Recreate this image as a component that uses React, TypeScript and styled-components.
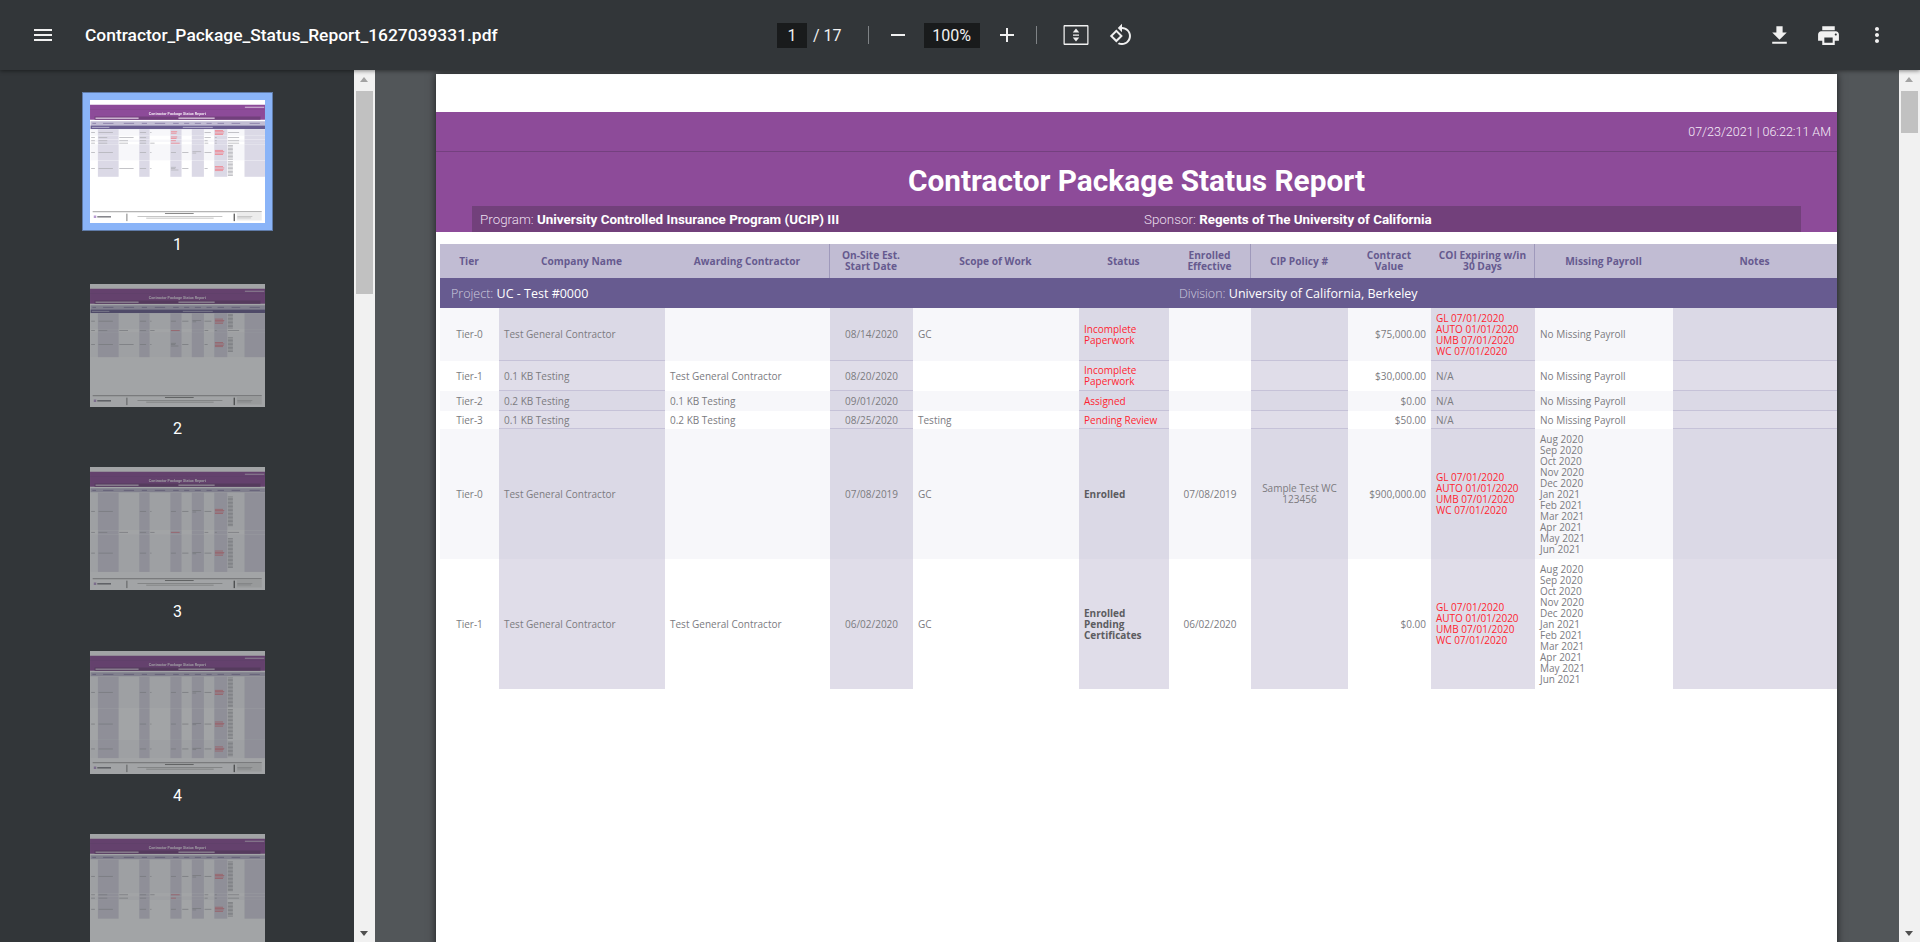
import React from "react";
import styled, { createGlobalStyle } from "styled-components";

interface ReportRow {
  h: number;
  cells: string[];
  statusBold?: boolean;
}

interface ThumbData {
  project: boolean;
  rows: ReportRow[];
}

interface Column {
  w: number;
  title: string;
  align: "left" | "center" | "right";
  shade?: boolean;
  divider?: boolean;
}

const columns: Column[] = [
  { w: 59, title: "Tier", align: "center" },
  { w: 166, title: "Company Name", align: "left", shade: true },
  { w: 165, title: "Awarding Contractor", align: "left", divider: true },
  { w: 83, title: "On-Site Est.\nStart Date", align: "center", shade: true },
  { w: 166, title: "Scope of Work", align: "left" },
  { w: 90, title: "Status", align: "left", shade: true },
  { w: 82, title: "Enrolled\nEffective", align: "center", divider: true },
  { w: 97, title: "CIP Policy #", align: "center", shade: true },
  { w: 83, title: "Contract\nValue", align: "right" },
  { w: 104, title: "COI Expiring w/in\n30 Days", align: "left", shade: true, divider: true },
  { w: 138, title: "Missing Payroll", align: "left" },
  { w: 164, title: "Notes", align: "left", shade: true },
];

const COI = "GL 07/01/2020\nAUTO 01/01/2020\nUMB 07/01/2020\nWC 07/01/2020";
const MONTHS =
  "Aug 2020\nSep 2020\nOct 2020\nNov 2020\nDec 2020\nJan 2021\nFeb 2021\nMar 2021\nApr 2021\nMay 2021\nJun 2021";
const NO_PAYROLL = "No Missing Payroll";
const PAPERWORK = "Incomplete\nPaperwork";
const TGC = "Test General Contractor";

const rows: ReportRow[] = [
  { h: 53, cells: ["Tier-0", TGC, "", "08/14/2020", "GC", PAPERWORK, "", "", "$75,000.00", COI, NO_PAYROLL, ""] },
  { h: 30, cells: ["Tier-1", "0.1 KB Testing", TGC, "08/20/2020", "", PAPERWORK, "", "", "$30,000.00", "N/A", NO_PAYROLL, ""] },
  { h: 20, cells: ["Tier-2", "0.2 KB Testing", "0.1 KB Testing", "09/01/2020", "", "Assigned", "", "", "$0.00", "N/A", NO_PAYROLL, ""] },
  { h: 18, cells: ["Tier-3", "0.1 KB Testing", "0.2 KB Testing", "08/25/2020", "Testing", "Pending Review", "", "", "$50.00", "N/A", NO_PAYROLL, ""] },
  { h: 130, statusBold: true, cells: ["Tier-0", TGC, "", "07/08/2019", "GC", "Enrolled", "07/08/2019", "Sample Test WC\n123456", "$900,000.00", COI, MONTHS, ""] },
  { h: 130, statusBold: true, cells: ["Tier-1", TGC, TGC, "06/02/2020", "GC", "Enrolled\nPending\nCertificates", "06/02/2020", "", "$0.00", COI, MONTHS, ""] },
];

const longRow = (h: number): ReportRow => ({
  h,
  statusBold: true,
  cells: rows[4].cells.map((c, i) => (i === 10 ? `${MONTHS}\n${MONTHS}` : c)),
});

const laterPages: ThumbData[] = [
  { project: true, rows: [{ ...rows[4], h: 128 }, { ...rows[3], h: 24 }, { ...rows[5], h: 200 }] },
  { project: false, rows: [longRow(303), { ...rows[3], h: 33 }, longRow(300)] },
  { project: false, rows: [longRow(255), longRow(253), { ...rows[4], h: 146 }] },
  { project: false, rows: [longRow(271), { ...rows[3], h: 25 }, { ...rows[2], h: 28 }, { ...rows[4], h: 150 }] },
];

const gridColumns = columns.map((c) => `${c.w}px`).join(" ");

const GlobalStyle = createGlobalStyle`
  html, body {
    margin: 0;
    height: 100%;
    overflow: hidden;
    background: #323639;
  }
`;

const Viewer = styled.div`
  height: 100vh;
  display: flex;
  flex-direction: column;
  font-family: "Roboto", "Liberation Sans", sans-serif;
`;

const Toolbar = styled.header`
  position: relative;
  z-index: 2;
  flex: none;
  height: 70px;
  display: grid;
  grid-template-columns: 777px 370px 1fr;
  align-items: center;
  background: #323639;
  color: #fff;
  box-shadow: 0 1px 4px rgba(0, 0, 0, 0.45);
`;

const ToolbarLeft = styled.div`
  display: flex;
  align-items: center;
  padding-left: 31px;
  gap: 30px;
`;

const FileName = styled.div`
  font-size: 17.4px;
  font-weight: 500;
  white-space: nowrap;
`;

const ToolbarCenter = styled.div`
  display: flex;
  align-items: center;
`;

const ToolbarRight = styled.div`
  display: flex;
  align-items: center;
  justify-content: flex-end;
  padding-right: 31px;
  gap: 24px;
`;

const IconSvg = styled.svg<{ $gap?: number }>`
  display: block;
  flex: none;
  width: ${(p) => p.width ?? 24}px;
  height: ${(p) => p.height ?? 24}px;
  margin-left: ${(p) => p.$gap ?? 0}px;
  fill: #f1f1f1;
`;

const InputBox = styled.div<{ $w: number; $gap?: number }>`
  width: ${(p) => p.$w}px;
  height: 25px;
  margin-left: ${(p) => p.$gap ?? 0}px;
  display: flex;
  align-items: center;
  justify-content: center;
  background: #191b1c;
  font-size: 16px;
  color: #f1f1f1;
`;

const PageTotal = styled.span`
  margin-left: 6px;
  font-size: 16px;
  color: #f1f1f1;
  white-space: pre;
`;

const Separator = styled.span<{ $left: number; $right: number }>`
  width: 1px;
  height: 18px;
  margin: 0 ${(p) => p.$right}px 0 ${(p) => p.$left}px;
  background: #7f8386;
`;

const Body = styled.div`
  flex: 1;
  min-height: 0;
  display: flex;
`;

const Sidebar = styled.aside`
  width: 354px;
  flex: none;
  overflow: hidden;
  padding-top: 30px;
  display: flex;
  flex-direction: column;
  align-items: center;
  background: #323639;
`;

const ThumbItem = styled.div`
  flex: none;
  width: 175px;
  height: 183.5px;
  margin-left: 1px;
  display: flex;
  flex-direction: column;
  align-items: center;
`;

const ThumbFrame = styled.div<{ $active: boolean }>`
  width: 175px;
  height: 123px;
  background: #fff;
  opacity: ${(p) => (p.$active ? 1 : 0.55)};
  outline: ${(p) => (p.$active ? "7px solid #8ab4f8" : "none")};
  box-shadow: ${(p) => (p.$active ? "0 0 0 8px #5f7ba8" : "none")};
`;

const ThumbLabel = styled.div`
  margin-top: 14px;
  color: #fff;
  font-size: 16px;
  line-height: 16px;
`;

const ScrollTrack = styled.div`
  position: relative;
  flex: none;
  width: 21px;
  background: #f1f1f1;
`;

const ScrollThumb = styled.div<{ $top: number; $height: number }>`
  position: absolute;
  left: 2px;
  right: 2px;
  top: ${(p) => p.$top}px;
  height: ${(p) => p.$height}px;
  background: #c1c1c1;
`;

const ScrollArrow = styled.div<{ $down?: boolean }>`
  position: absolute;
  left: 6px;
  ${(p) => (p.$down ? "bottom: 6px;" : "top: 7px;")}
  width: 0;
  height: 0;
  border-left: 4.5px solid transparent;
  border-right: 4.5px solid transparent;
  ${(p) => (p.$down ? "border-top: 5px solid #505050;" : "border-bottom: 5px solid #a3a3a3;")}
`;

const Main = styled.main`
  flex: 1;
  min-width: 0;
  overflow: hidden;
  padding: 4px 0 0 61px;
  background: #525659;
`;

const Page = styled.div`
  width: 1401px;
  height: 985px;
  padding-top: 38px;
  box-sizing: border-box;
  background: #fff;
  box-shadow: 0 0 8px rgba(0, 0, 0, 0.65);
`;

const Banner = styled.section`
  height: 120px;
  display: flex;
  flex-direction: column;
  background: #8d4b99;
  color: #fff;
`;

const StampRow = styled.div`
  height: 39px;
  flex: none;
  display: flex;
  align-items: center;
  justify-content: flex-end;
  padding: 0 6px 0 0;
  border-bottom: 1px solid #74407f;
  font-size: 12.5px;
  font-weight: 300;
  color: #f6eef8;
`;

const ReportTitle = styled.h1`
  flex: 1;
  margin: 0;
  padding-top: 2px;
  display: flex;
  align-items: center;
  justify-content: center;
  font-size: 29.8px;
  font-weight: 700;
`;

const InfoBar = styled.div`
  height: 26px;
  flex: none;
  margin: 0 36px;
  display: grid;
  grid-template-columns: 672px 1fr;
  align-items: center;
  background: #72407b;
  font-size: 13.4px;
`;

const InfoItem = styled.div`
  padding-left: 8px;
  font-weight: 300;
  color: #ebdfee;
  white-space: nowrap;
  &:last-child {
    padding-left: 0;
  }
  b {
    font-weight: 700;
    color: #fff;
  }
`;

const Table = styled.div`
  margin: 12px 0 0 4px;
  font-family: "Open Sans", "Liberation Sans", sans-serif;
  font-size: 10px;
  line-height: 11px;
`;

const HeaderRow = styled.div`
  height: 34px;
  display: grid;
  grid-template-columns: ${gridColumns};
  background: #c1bcd3;
`;

const HeaderCell = styled.div<{ $divider?: boolean }>`
  display: flex;
  align-items: center;
  justify-content: center;
  text-align: center;
  white-space: pre-line;
  font-size: 10.2px;
  font-weight: 700;
  color: #665a8f;
  box-sizing: border-box;
  border-right: 1px solid ${(p) => (p.$divider ? "#9f99bb" : "transparent")};
`;

const ProjectRow = styled.div`
  height: 30px;
  display: grid;
  grid-template-columns: 739px 1fr;
  align-items: center;
  background: #675b90;
  font-size: 12.5px;
  color: #fff;
`;

const ProjectItem = styled.div`
  padding-left: 11px;
  white-space: nowrap;
  &:last-child {
    padding-left: 0;
  }
  span {
    color: #cfcbdf;
    font-weight: 300;
  }
`;

const DataRow = styled.div<{ $h: number; $odd: boolean }>`
  height: ${(p) => p.$h}px;
  display: grid;
  grid-template-columns: ${gridColumns};
  background: ${(p) => (p.$odd ? "#f7f7fa" : "#fff")};
`;

type Tone = "plain" | "red" | "bold";

const toneColor: Record<Tone, string> = {
  plain: "#7b7b7f",
  red: "#ff1f30",
  bold: "#5c5c60",
};

const DataCell = styled.div<{ $align: string; $shade?: boolean; $odd: boolean; $tone: Tone; $line: boolean }>`
  display: flex;
  align-items: center;
  justify-content: ${(p) =>
    p.$align === "center" ? "center" : p.$align === "right" ? "flex-end" : "flex-start"};
  box-sizing: border-box;
  padding: 1px 5px 0;
  text-align: ${(p) => p.$align};
  white-space: pre-line;
  color: ${(p) => toneColor[p.$tone]};
  font-weight: ${(p) => (p.$tone === "bold" ? 700 : 400)};
  background: ${(p) => (p.$shade ? (p.$odd ? "#dbd9e6" : "#e0dde9") : "transparent")};
  border-bottom: 1px solid ${(p) => (p.$shade && p.$line ? "#c6c2d8" : "transparent")};
`;

const MenuIcon = () => (
  <IconSvg viewBox="0 0 24 24">
    <path d="M3 18h18v-2H3v2zm0-5h18v-2H3v2zm0-7v2h18V6H3z" />
  </IconSvg>
);

const MinusIcon = () => (
  <IconSvg viewBox="0 0 24 24">
    <path d="M19 13H5v-2h14v2z" />
  </IconSvg>
);

const PlusIcon = () => (
  <IconSvg viewBox="0 0 24 24" $gap={15}>
    <path d="M19 13h-6v6h-2v-6H5v-2h6V5h2v6h6v2z" />
  </IconSvg>
);

const FitIcon = () => (
  <IconSvg viewBox="0 0 24 24" width={30} height={30}>
    <path d="M3 4h18c.55 0 1 .45 1 1v14c0 .55-.45 1-1 1H3c-.55 0-1-.45-1-1V5c0-.55.45-1 1-1zm0 1.2v13.6h18V5.2H3z" />
    <path d="M12 6.8l2.6 3.2H9.4L12 6.8zM12 17.2L9.4 14h5.2L12 17.2zM9.6 11.5h4.8v1H9.6z" />
  </IconSvg>
);

const RotateIcon = () => (
  <IconSvg viewBox="0 0 24 24" $gap={18}>
    <path d="M7.34 6.41L.86 12.9l6.49 6.48 6.49-6.48-6.5-6.49zM3.69 12.9l3.66-3.66L11 12.9l-3.66 3.66-3.65-3.66zm15.67-6.26C17.61 4.88 15.3 4 13 4V.76L8.76 5 13 9.24V6c1.79 0 3.58.68 4.95 2.05 2.73 2.73 2.73 7.17 0 9.9C16.58 19.32 14.79 20 13 20c-.97 0-1.94-.21-2.84-.61l-1.49 1.49C10.02 21.62 11.51 22 13 22c2.3 0 4.61-.88 6.36-2.64 3.52-3.51 3.52-9.21 0-12.72z" />
  </IconSvg>
);

const DownloadIcon = () => (
  <IconSvg viewBox="0 0 24 24" width={25} height={25}>
    <path d="M19 9h-4V3H9v6H5l7 7 7-7zM5 18v2h14v-2H5z" />
  </IconSvg>
);

const PrintIcon = () => (
  <IconSvg viewBox="0 0 24 24" width={25} height={25}>
    <path d="M19 8H5c-1.66 0-3 1.34-3 3v6h4v4h12v-4h4v-6c0-1.66-1.34-3-3-3zm-3 11H8v-5h8v5zm3-7c-.55 0-1-.45-1-1s.45-1 1-1 1 .45 1 1-.45 1-1 1zm-1-9H6v4h12V3z" />
  </IconSvg>
);

const MoreIcon = () => (
  <IconSvg viewBox="0 0 24 24">
    <path d="M12 8c1.1 0 2-.9 2-2s-.9-2-2-2-2 .9-2 2 .9 2 2 2zm0 2c-1.1 0-2 .9-2 2s.9 2 2 2 2-.9 2-2-.9-2-2-2zm0 6c-1.1 0-2 .9-2 2s.9 2 2 2 2-.9 2-2-.9-2-2-2z" />
  </IconSvg>
);

// tiny copy of the report page, drawn in page pixels and blurred like a rendered preview
const ThumbPage = ({ data, id }: { data: ThumbData; id: string }) => {
  const xs = columns.reduce<number[]>((acc, c) => [...acc, acc[acc.length - 1] + c.w], [4]);
  let y = data.project ? 234 : 204;
  return (
    <svg viewBox="0 0 1401 985" width="175" height="123" style={{ display: "block" }}>
      <defs>
        <filter id={id}>
          <feGaussianBlur stdDeviation="4" />
        </filter>
      </defs>
      <g filter={`url(#${id})`}>
        <rect x="0" y="38" width="1401" height="120" fill="#8d4b99" />
        <rect x="0" y="77" width="1401" height="2" fill="#74407f" />
        <rect x="1240" y="54" width="155" height="8" fill="#d8c2dd" />
        <text x="700" y="118" fontFamily="Roboto" fontWeight="700" fontSize="30" textAnchor="middle" fill="#efe4f1">
          Contractor Package Status Report
        </text>
        <rect x="36" y="132" width="1329" height="26" fill="#72407b" />
        <rect x="44" y="141" width="345" height="9" fill="#eadcee" />
        <rect x="708" y="141" width="290" height="9" fill="#eadcee" />
        <rect x="4" y="170" width="1397" height="34" fill="#c1bcd3" />
        {data.project && (
          <>
            <rect x="4" y="204" width="1397" height="30" fill="#675b90" />
            <rect x="15" y="215" width="140" height="9" fill="#a9a3c4" />
            <rect x="743" y="215" width="240" height="9" fill="#a9a3c4" />
          </>
        )}
        {columns.map((c, i) => (
          <rect key={i} x={xs[i] + c.w / 4} y="183" width={c.w / 2} height="8" fill="#8f85ad" />
        ))}
        {data.rows.map((row, r) => {
          const top = y;
          y += row.h;
          return (
            <g key={r}>
              <rect x="4" y={top} width="1397" height={row.h} fill={r % 2 === 0 ? "#f7f7fa" : "#fff"} />
              {columns.map((c, i) => {
                const lines = row.cells[i] ? row.cells[i].split("\n") : [];
                const red = (i === 5 && !row.statusBold) || (i === 9 && row.cells[i] !== "N/A");
                return (
                  <g key={i}>
                    {c.shade && <rect x={xs[i]} y={top} width={c.w} height={row.h} fill="#dbd9e6" />}
                    {lines.map((line, l) => (
                      <rect
                        key={l}
                        x={xs[i] + 5}
                        y={top + row.h / 2 - (lines.length * 11) / 2 + l * 11 + 2}
                        width={Math.min(line.length * 5, c.w - 10)}
                        height="6"
                        fill={red ? "#f07d89" : "#b0b0b6"}
                      />
                    ))}
                  </g>
                );
              })}
            </g>
          );
        })}
        <rect x="21" y="893" width="1354" height="5" fill="#666" />
        <rect x="30" y="925" width="20" height="20" fill="#b79ad0" />
        <rect x="58" y="930" width="110" height="11" fill="#77777c" />
        <rect x="290" y="910" width="10" height="60" fill="#9a9a9a" />
        <rect x="600" y="905" width="230" height="8" fill="#8a8a8a" />
        <rect x="380" y="930" width="680" height="6" fill="#b3b3b3" />
        <rect x="450" y="943" width="540" height="6" fill="#b3b3b3" />
        <rect x="1150" y="910" width="10" height="60" fill="#555" />
        <rect x="1175" y="905" width="200" height="60" fill="#ececec" />
        <rect x="1180" y="930" width="120" height="5" fill="#b3b3b3" />
        <rect x="1180" y="942" width="110" height="5" fill="#b3b3b3" />
      </g>
    </svg>
  );
};

const App = () => (
  <Viewer>
    <GlobalStyle />
    <Toolbar>
      <ToolbarLeft>
        <MenuIcon />
        <FileName>Contractor_Package_Status_Report_1627039331.pdf</FileName>
      </ToolbarLeft>
      <ToolbarCenter>
        <InputBox $w={30}>1</InputBox>
        <PageTotal>/ 17</PageTotal>
        <Separator $left={26} $right={17} />
        <MinusIcon />
        <InputBox $w={56} $gap={14}>100%</InputBox>
        <PlusIcon />
        <Separator $left={17} $right={24} />
        <FitIcon />
        <RotateIcon />
      </ToolbarCenter>
      <ToolbarRight>
        <DownloadIcon />
        <PrintIcon />
        <MoreIcon />
      </ToolbarRight>
    </Toolbar>
    <Body>
      <Sidebar>
        <ThumbItem>
          <ThumbFrame $active>
            <ThumbPage data={{ project: true, rows }} id="thumb-1" />
          </ThumbFrame>
          <ThumbLabel>1</ThumbLabel>
        </ThumbItem>
        {laterPages.map((data, i) => (
          <ThumbItem key={i}>
            <ThumbFrame $active={false}>
              <ThumbPage data={data} id={`thumb-${i + 2}`} />
            </ThumbFrame>
            {i < laterPages.length - 1 && <ThumbLabel>{i + 2}</ThumbLabel>}
          </ThumbItem>
        ))}
      </Sidebar>
      <ScrollTrack>
        <ScrollArrow />
        <ScrollThumb $top={21} $height={203} />
        <ScrollArrow $down />
      </ScrollTrack>
      <Main>
        <Page>
          <Banner>
            <StampRow>07/23/2021 | 06:22:11 AM</StampRow>
            <ReportTitle>Contractor Package Status Report</ReportTitle>
            <InfoBar>
              <InfoItem>
                Program: <b>University Controlled Insurance Program (UCIP) III</b>
              </InfoItem>
              <InfoItem>
                Sponsor: <b>Regents of The University of California</b>
              </InfoItem>
            </InfoBar>
          </Banner>
          <Table>
            <HeaderRow>
              {columns.map((c) => (
                <HeaderCell key={c.title} $divider={c.divider}>
                  {c.title}
                </HeaderCell>
              ))}
            </HeaderRow>
            <ProjectRow>
              <ProjectItem>
                <span>Project:</span> UC - Test #0000
              </ProjectItem>
              <ProjectItem>
                <span>Division:</span> University of California, Berkeley
              </ProjectItem>
            </ProjectRow>
            {rows.map((row, r) => (
              <DataRow key={r} $h={row.h} $odd={r % 2 === 0}>
                {columns.map((c, i) => {
                  let tone: Tone = "plain";
                  if (i === 5) tone = row.statusBold ? "bold" : "red";
                  if (i === 9 && row.cells[i] !== "N/A") tone = "red";
                  return (
                    <DataCell
                      key={c.title}
                      $align={c.align}
                      $shade={c.shade}
                      $odd={r % 2 === 0}
                      $tone={tone}
                      $line={r < 4}
                    >
                      {row.cells[i]}
                    </DataCell>
                  );
                })}
              </DataRow>
            ))}
          </Table>
        </Page>
      </Main>
      <ScrollTrack>
        <ScrollArrow />
        <ScrollThumb $top={21} $height={42} />
        <ScrollArrow $down />
      </ScrollTrack>
    </Body>
  </Viewer>
);

export default App;
